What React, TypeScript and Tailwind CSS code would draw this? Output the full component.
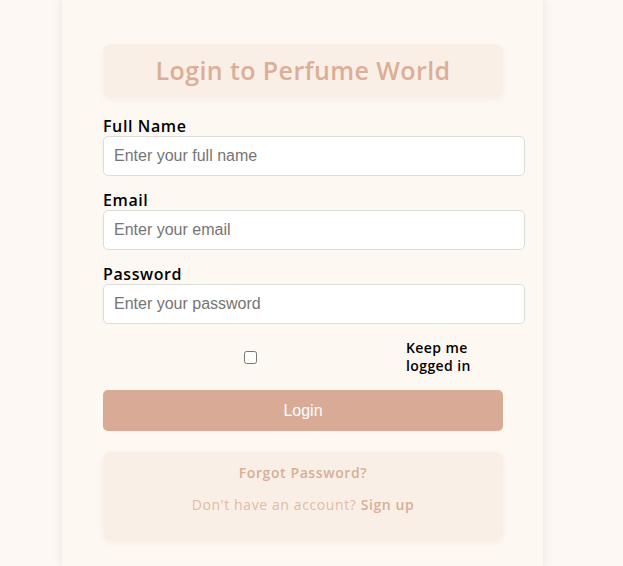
import React, { useState } from 'react';

const font = { fontFamily: '"Open Sans", "DejaVu Sans", sans-serif' };

const Field: React.FC<{ label: string; type: string; placeholder: string }> = ({ label, type, placeholder }) => (
  <div className="mb-[15px]">
    <label className="block text-[16px] font-semibold leading-[18px] tracking-[0.6px] text-black mb-[1px]">{label}</label>
    <input
      type={type}
      placeholder={placeholder}
      className="block w-[422px] h-[40px] px-[10px] bg-white border border-[#dcdcdc] rounded-[5px] text-[16px] text-black placeholder:text-[#757575] outline-none"
      style={{ fontFamily: '"Liberation Sans", Arial, sans-serif' }}
    />
  </div>
);

export default function App() {
  const [keep, setKeep] = useState(false);

  return (
    <div className="w-[623px] h-[566px] bg-[#fdf8f3] overflow-hidden" style={font}>
      <div className="ml-[62px] w-[481px] min-h-[566px] bg-[#fef8f3] shadow-[0_0_8px_rgba(190,160,140,0.25)] pl-[41px] pr-[40px] pt-[44px]">
        <div className="w-[400px] h-[54px] rounded-[8px] bg-[#f9efe6] shadow-[0_2px_6px_rgba(200,170,150,0.12)] flex items-center justify-center">
          <h1 className="text-[25px] font-semibold text-[#dcae97] tracking-[0.4px]">Login to Perfume World</h1>
        </div>

        <form className="mt-[19px]" onSubmit={e => e.preventDefault()}>
          <Field label="Full Name" type="text" placeholder="Enter your full name" />
          <Field label="Email" type="email" placeholder="Enter your email" />
          <Field label="Password" type="password" placeholder="Enter your password" />

          <div className="flex items-center h-[36px]">
            <div className="w-[294px] flex justify-center">
              <input
                type="checkbox"
                checked={keep}
                onChange={e => setKeep(e.target.checked)}
                className="w-[13px] h-[13px] m-0"
              />
            </div>
            <label className="ml-[9px] w-[84px] text-[14px] font-semibold leading-[18px] tracking-[0.4px] text-black">Keep me logged in</label>
          </div>

          <button
            type="submit"
            className="mt-[15px] w-[400px] h-[41px] rounded-[5px] bg-[#d9ab97] text-white text-[16px]"
            style={{ fontFamily: '"Liberation Sans", Arial, sans-serif' }}
          >
            Login
          </button>
        </form>

        <div className="mt-[21px] w-[400px] h-[88px] rounded-[8px] bg-[#f9efe6] shadow-[0_2px_6px_rgba(200,170,150,0.15)] flex flex-col items-center pt-[11px]">
          <a className="text-[14px] font-semibold tracking-[0.6px] text-[#d7ae98] leading-[20px]">Forgot Password?</a>
          <p className="mt-[12px] text-[14px] tracking-[0.6px] text-[#e2bba8] leading-[20px]">
            Don't have an account? <a className="font-semibold text-[#d7ae98]">Sign up</a>
          </p>
        </div>
      </div>
    </div>
  );
}
